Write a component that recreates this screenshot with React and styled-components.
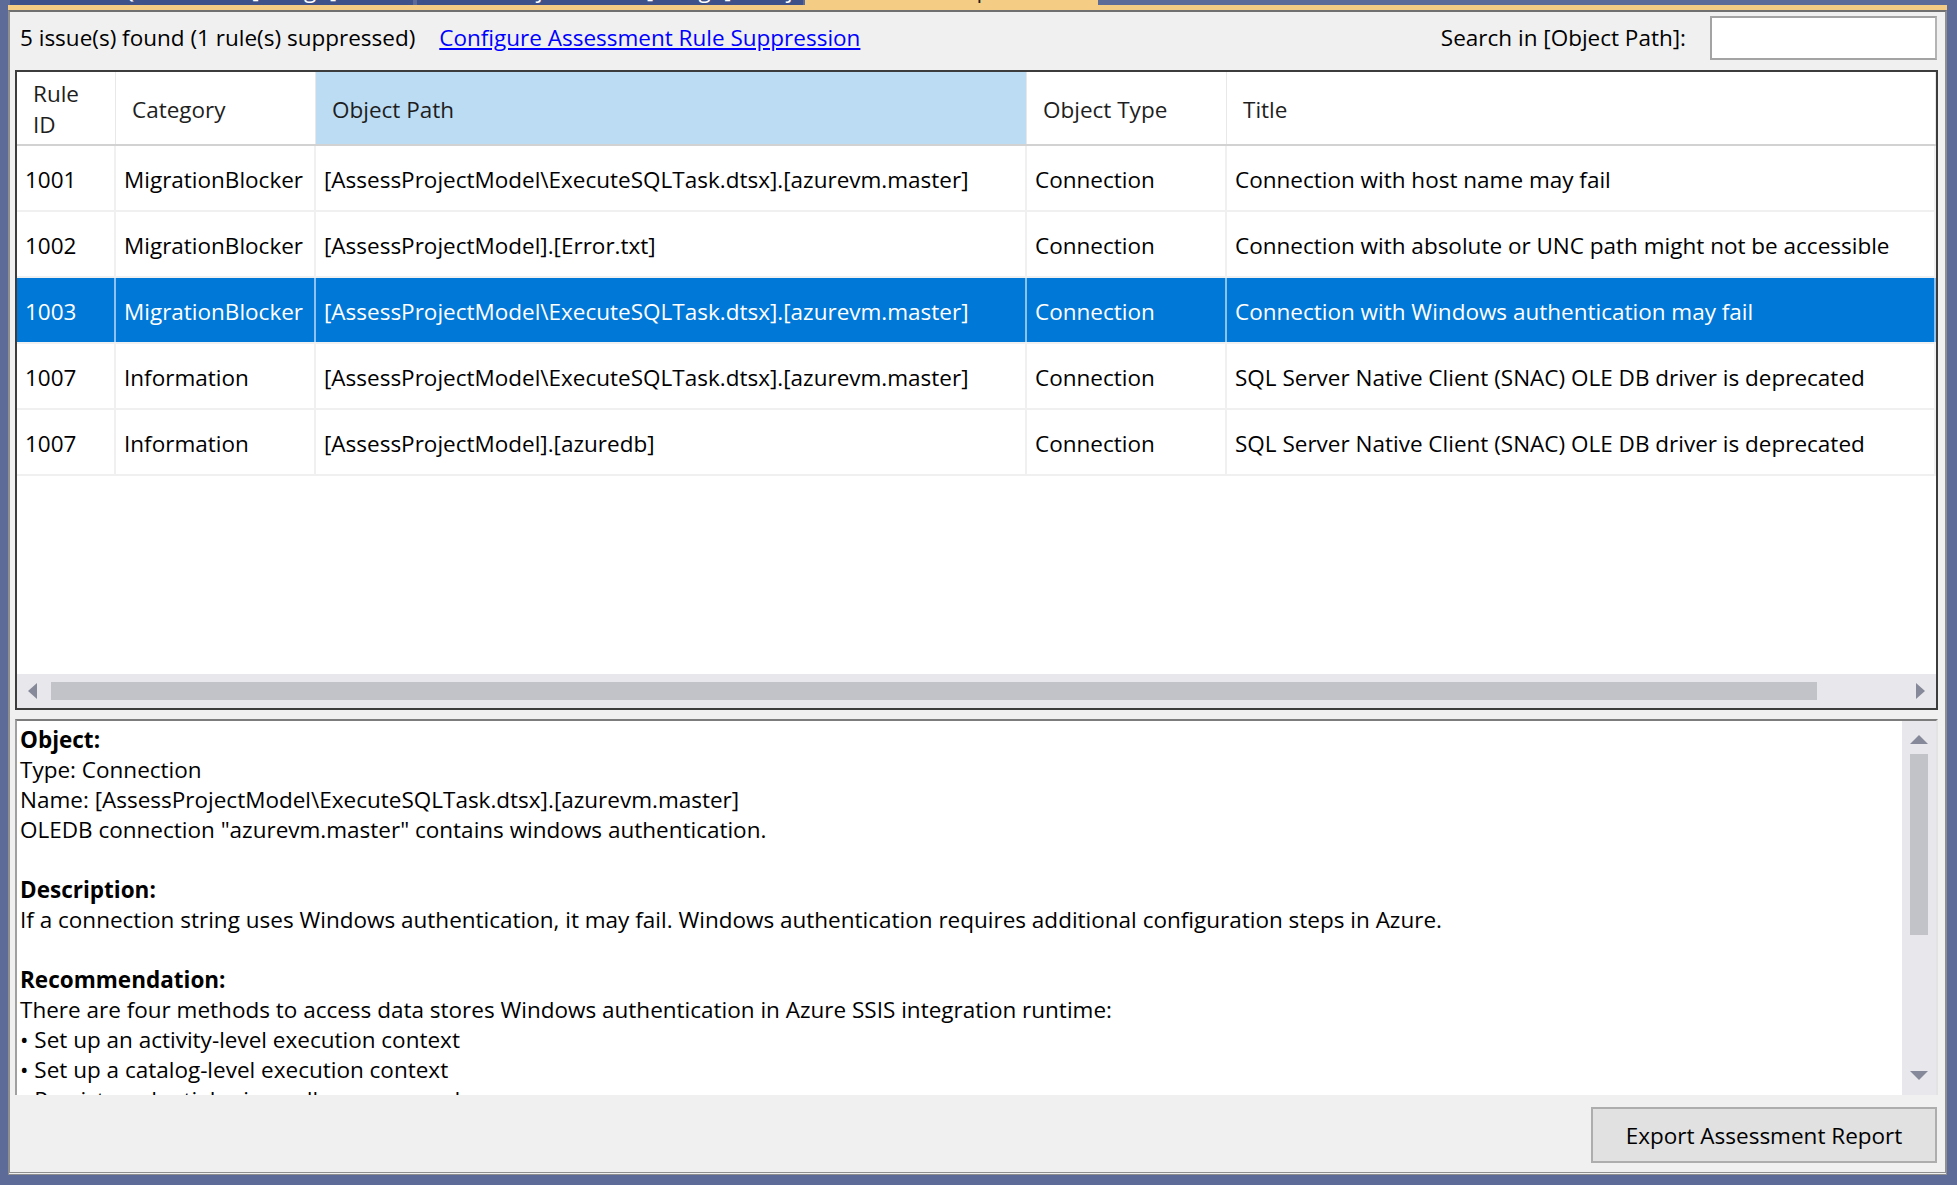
import React from 'react';
import styled, { createGlobalStyle } from 'styled-components';

const FONT = `"Open Sans", "Liberation Sans", sans-serif`;
const TEXT_SIZE = '22.5px';

const GlobalStyle = createGlobalStyle`
  html, body {
    margin: 0;
    padding: 0;
  }
  body {
    background: #5d6b98;
    font-family: ${FONT};
  }
`;

const Page = styled.div`
  width: 1957px;
  height: 1185px;
  box-sizing: border-box;
  padding: 0 10px 0 8px;
  display: flex;
  flex-direction: column;
  background: #5d6b98;
  overflow: hidden;
`;

const TabStrip = styled.div`
  display: flex;
  height: 5px;
  overflow: hidden;
`;

const Tab = styled.div`
  flex: none;
  width: ${({ width }) => width}px;
  margin-left: ${({ offset }) => offset || 0}px;
  height: 5px;
  overflow: hidden;
  background: ${({ active }) => (active ? '#f5cc84' : '#3f5189')};
  color: ${({ active }) => (active ? '#1e1e1e' : '#ffffff')};
  font-size: ${TEXT_SIZE};
  line-height: 24px;
  white-space: nowrap;
`;

const TabLabel = styled.div`
  margin-top: -22px;
  padding-left: 14px;
`;

const AccentLine = styled.div`
  height: 5px;
  background: #f5cc84;
`;

const Panel = styled.div`
  box-sizing: border-box;
  height: 1165px;
  display: flex;
  flex-direction: column;
  padding: 0 7px 0 5px;
  background: #f0f0f0;
  border: 2px solid #8f8f8f;
  border-top-color: #707070;
  border-bottom: 3px double #8f8f8f;
  color: #000;
  font-size: ${TEXT_SIZE};
`;

const TopBar = styled.div`
  height: 52px;
  display: flex;
  align-items: center;
  padding-left: 5px;
  white-space: nowrap;
`;

const Link = styled.a`
  margin-left: 24px;
  color: #0000ff;
  text-decoration: underline;
  cursor: pointer;
`;

const Spacer = styled.div`
  flex: 1;
`;

const SearchLabel = styled.span`
  margin-right: 24px;
`;

const SearchInput = styled.input`
  box-sizing: border-box;
  width: 227px;
  height: 44px;
  margin-right: 1px;
  border: 2px solid #a3a3a3;
  border-right-color: #b4b4b4;
  background: #fff;
  outline: none;
  font: inherit;
`;

const TableBox = styled.div`
  box-sizing: border-box;
  height: 641px;
  margin-top: 6px;
  display: flex;
  flex-direction: column;
  background: #fff;
  border: 2px solid #3c3c3c;
`;

const COLUMNS = '99px 200px 711px 200px 1fr';

const HeaderRow = styled.div`
  display: grid;
  grid-template-columns: ${COLUMNS};
  height: 74px;
  box-sizing: border-box;
  border-bottom: 2px solid #d2d2d2;
`;

const HeaderCell = styled.div`
  display: flex;
  align-items: center;
  padding: 3px 0 0 16px;
  line-height: 31px;
  color: #1e1e1e;
  white-space: nowrap;
  border-right: 1px solid #e8e8e8;
  background: ${({ sorted }) => (sorted ? '#bcdcf4' : '#fff')};
`;

const Row = styled.div`
  display: grid;
  grid-template-columns: ${COLUMNS};
  height: 66px;
  box-sizing: border-box;
  border-bottom: 2px solid #f0f0f0;
  background: ${({ selected }) => (selected ? '#0078d7' : '#fff')};
  color: ${({ selected }) => (selected ? '#fff' : '#000')};
`;

const Cell = styled.div`
  display: flex;
  align-items: center;
  padding: 3px 0 0 8px;
  white-space: nowrap;
  overflow: hidden;
  border-right: 2px solid
    ${({ selected }) => (selected ? 'rgba(255,255,255,0.55)' : '#f0f0f0')};
`;

const EmptyArea = styled.div`
  flex: 1;
`;

const HScrollBar = styled.div`
  height: 34px;
  display: flex;
  align-items: center;
  padding: 0 11px;
  background: #e8e8ec;
`;

const HThumb = styled.div`
  width: 1766px;
  height: 18px;
  margin-left: 14px;
  background: #c2c3c9;
`;

const ArrowLeft = styled.div`
  width: 0;
  height: 0;
  border-top: 8px solid transparent;
  border-bottom: 8px solid transparent;
  border-right: 9px solid #868999;
`;

const ArrowRight = styled.div`
  width: 0;
  height: 0;
  border-top: 8px solid transparent;
  border-bottom: 8px solid transparent;
  border-left: 9px solid #868999;
`;

const DetailBox = styled.div`
  box-sizing: border-box;
  height: 376px;
  margin-top: 9px;
  display: flex;
  background: #fff;
  border-top: 2px solid #7c7c7c;
  border-left: 2px solid #a0a0a0;
  border-right: 2px solid #e3e3e3;
`;

const DetailText = styled.div`
  flex: 1;
  overflow: hidden;
  padding: 4px 0 0 3px;
  line-height: 30px;
  white-space: nowrap;
`;

const Line = styled.div`
  height: 30px;
  font-weight: ${({ bold }) => (bold ? 700 : 400)};
`;

const VScrollBar = styled.div`
  width: 34px;
  display: flex;
  flex-direction: column;
  align-items: center;
  padding: 14px 0 15px;
  box-sizing: border-box;
  background: #e8e8ec;
`;

const ArrowUp = styled.div`
  width: 0;
  height: 0;
  border-left: 9px solid transparent;
  border-right: 9px solid transparent;
  border-bottom: 9px solid #868999;
`;

const ArrowDown = styled.div`
  width: 0;
  height: 0;
  border-left: 9px solid transparent;
  border-right: 9px solid transparent;
  border-top: 9px solid #868999;
`;

const VThumb = styled.div`
  width: 18px;
  height: 181px;
  margin-top: 10px;
  background: #c2c3c9;
`;

const BottomBar = styled.div`
  height: 77px;
  display: flex;
  justify-content: flex-end;
  align-items: flex-start;
  padding-top: 12px;
  box-sizing: border-box;
`;

const ExportButton = styled.button`
  box-sizing: border-box;
  width: 346px;
  height: 56px;
  margin-right: 1px;
  padding: 0;
  background: #e1e1e1;
  border: 2px solid #adadad;
  color: #000;
  font-family: ${FONT};
  font-size: ${TEXT_SIZE};
  cursor: pointer;
`;

const headers = ['Rule ID', 'Category', 'Object Path', 'Object Type', 'Title'];

const issues = [
  {
    id: '1001',
    category: 'MigrationBlocker',
    path: '[AssessProjectModel\\ExecuteSQLTask.dtsx].[azurevm.master]',
    type: 'Connection',
    title: 'Connection with host name may fail',
  },
  {
    id: '1002',
    category: 'MigrationBlocker',
    path: '[AssessProjectModel].[Error.txt]',
    type: 'Connection',
    title: 'Connection with absolute or UNC path might not be accessible',
  },
  {
    id: '1003',
    category: 'MigrationBlocker',
    path: '[AssessProjectModel\\ExecuteSQLTask.dtsx].[azurevm.master]',
    type: 'Connection',
    title: 'Connection with Windows authentication may fail',
    selected: true,
  },
  {
    id: '1007',
    category: 'Information',
    path: '[AssessProjectModel\\ExecuteSQLTask.dtsx].[azurevm.master]',
    type: 'Connection',
    title: 'SQL Server Native Client (SNAC) OLE DB driver is deprecated',
  },
  {
    id: '1007',
    category: 'Information',
    path: '[AssessProjectModel].[azuredb]',
    type: 'Connection',
    title: 'SQL Server Native Client (SNAC) OLE DB driver is deprecated',
  },
];

const details = [
  { text: 'Object:', bold: true },
  { text: 'Type: Connection' },
  { text: 'Name: [AssessProjectModel\\ExecuteSQLTask.dtsx].[azurevm.master]' },
  { text: 'OLEDB connection "azurevm.master" contains windows authentication.' },
  { text: '' },
  { text: 'Description:', bold: true },
  {
    text:
      'If a connection string uses Windows authentication, it may fail. Windows authentication requires additional configuration steps in Azure.',
  },
  { text: '' },
  { text: 'Recommendation:', bold: true },
  {
    text:
      'There are four methods to access data stores Windows authentication in Azure SSIS integration runtime:',
  },
  { text: '\u2022 Set up an activity-level execution context' },
  { text: '\u2022 Set up a catalog-level execution context' },
  { text: '\u2022 Persist credentials via cmdkey command' },
  { text: '\u2022 Mount drives at package execution time (non-persistent)' },
];

const App = () => (
  <>
    <GlobalStyle />
    <Page>
      <TabStrip>
        <Tab width={403} offset={2}>
          <TabLabel>ExecuteSQLTask.dtsx [Design]</TabLabel>
        </Tab>
        <Tab width={386} offset={4}>
          <TabLabel>AssessProjectModel [Design] - Project</TabLabel>
        </Tab>
        <Tab width={293} offset={2} active>
          <TabLabel>Assessment Report</TabLabel>
        </Tab>
      </TabStrip>
      <AccentLine />
      <Panel>
        <TopBar>
          <span>5 issue(s) found (1 rule(s) suppressed)</span>
          <Link>Configure Assessment Rule Suppression</Link>
          <Spacer />
          <SearchLabel>Search in [Object Path]:</SearchLabel>
          <SearchInput type="text" />
        </TopBar>

        <TableBox>
          <HeaderRow>
            <HeaderCell>
              Rule
              <br />
              ID
            </HeaderCell>
            {headers.slice(1).map(h => (
              <HeaderCell key={h} sorted={h === 'Object Path'}>
                {h}
              </HeaderCell>
            ))}
          </HeaderRow>
          {issues.map((item, i) => (
            <Row key={i} selected={item.selected}>
              <Cell selected={item.selected}>{item.id}</Cell>
              <Cell selected={item.selected}>{item.category}</Cell>
              <Cell selected={item.selected}>{item.path}</Cell>
              <Cell selected={item.selected}>{item.type}</Cell>
              <Cell selected={item.selected}>{item.title}</Cell>
            </Row>
          ))}
          <EmptyArea />
          <HScrollBar>
            <ArrowLeft />
            <HThumb />
            <Spacer />
            <ArrowRight />
          </HScrollBar>
        </TableBox>

        <DetailBox>
          <DetailText>
            {details.map((line, i) => (
              <Line key={i} bold={line.bold}>
                {line.text}
              </Line>
            ))}
          </DetailText>
          <VScrollBar>
            <ArrowUp />
            <VThumb />
            <Spacer />
            <ArrowDown />
          </VScrollBar>
        </DetailBox>

        <BottomBar>
          <ExportButton>Export Assessment Report</ExportButton>
        </BottomBar>
      </Panel>
    </Page>
  </>
);

export default App;
